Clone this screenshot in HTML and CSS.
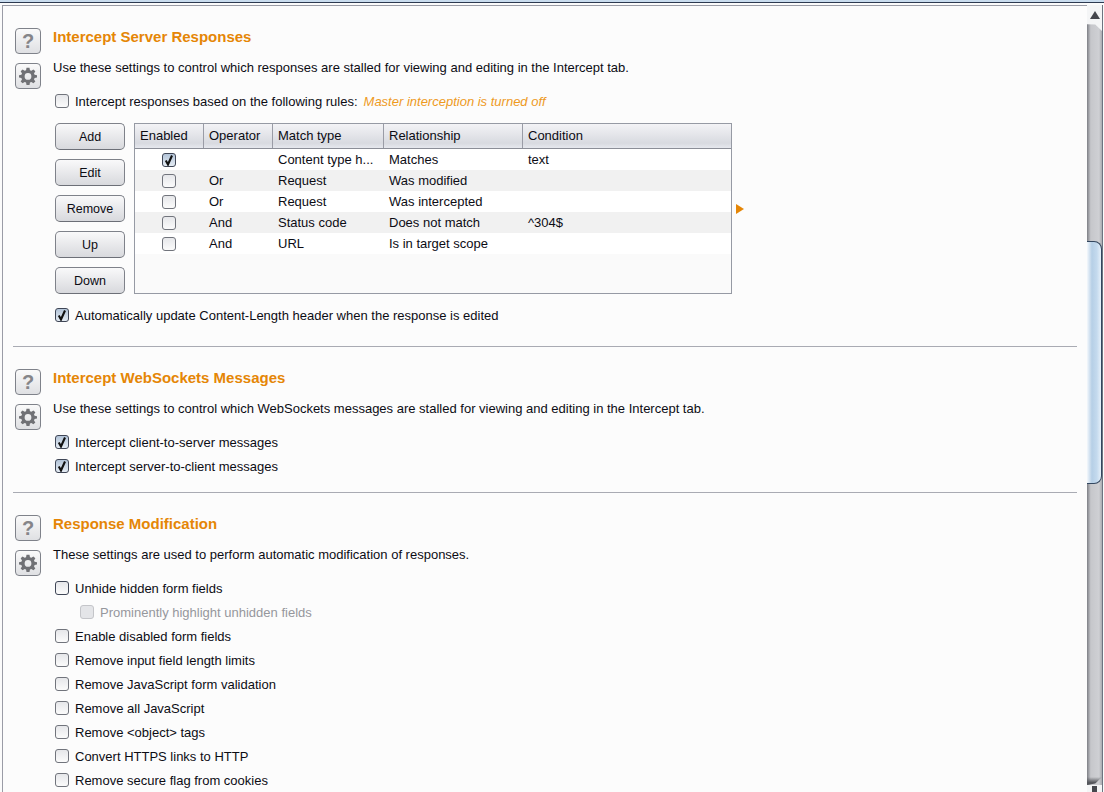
FILE: index.html
```html
<!DOCTYPE html>
<html lang="en">
<head>
<meta charset="utf-8">
<title>Intercept options</title>
<link rel="stylesheet" href="styles.css">
</head>
<body>
<svg class="defs" width="0" height="0">
  <defs>
    <symbol id="gear" viewBox="0 0 24 24">
      <path fill-rule="evenodd" d="M10 1h4l.6 3.2 1.900.8 2.700-1.800 2.600 2.600L20 8.500l.8 1.900L24 11v3l-3.200.6-.8 1.900 1.800 2.700-2.600 2.600-2.700-1.800-1.900.8L14 24h-4l-.6-3.200-1.900-.8-2.700 1.800-2.600-2.600L4 16.500l-.8-1.900L0 14v-3l3.200-.6.800-1.900-1.800-2.700 2.600-2.600L7.500 5l1.900-.8L10 1zm2 7a4.500 4.500 0 1 0 0 9 4.500 4.500 0 0 0 0-9z"/>
    </symbol>
    <symbol id="tick" viewBox="0 0 12 12">
      <path d="M2.800 6.500 5 10.500 9 1.500" fill="none" stroke="#111" stroke-width="2.100"/>
    </symbol>
  </defs>
</svg>
<div class="chrome"></div>
<div class="window">
  <main class="pane">
    <section class="section first">
      <div class="icons">
        <div class="iconbtn help">?</div>
        <div class="iconbtn"><svg class="gear"><use href="#gear"/></svg></div>
      </div>
      <div class="body">
        <h2>Intercept Server Responses</h2>
        <p class="desc">Use these settings to control which responses are stalled for viewing and editing in the Intercept tab.</p>
        <label class="row master"><span class="cb"></span>Intercept responses based on the following rules:<em class="note">Master interception is turned off</em></label>
        <div class="rules">
          <div class="buttons">
            <button>Add</button>
            <button>Edit</button>
            <button>Remove</button>
            <button>Up</button>
            <button>Down</button>
          </div>
          <div class="table">
            <div class="thead">
              <div class="c1">Enabled</div><div class="c2">Operator</div><div class="c3">Match type</div><div class="c4">Relationship</div><div class="c5">Condition</div>
            </div>
            <div class="tr">
              <div class="c1"><span class="cb on"><svg><use href="#tick"/></svg></span></div><div class="c2"></div><div class="c3">Content type h...</div><div class="c4">Matches</div><div class="c5">text</div>
            </div>
            <div class="tr alt">
              <div class="c1"><span class="cb"></span></div><div class="c2">Or</div><div class="c3">Request</div><div class="c4">Was modified</div><div class="c5"></div>
            </div>
            <div class="tr">
              <div class="c1"><span class="cb"></span></div><div class="c2">Or</div><div class="c3">Request</div><div class="c4">Was intercepted</div><div class="c5"></div>
            </div>
            <div class="tr alt">
              <div class="c1"><span class="cb"></span></div><div class="c2">And</div><div class="c3">Status code</div><div class="c4">Does not match</div><div class="c5">^304$</div>
            </div>
            <div class="tr">
              <div class="c1"><span class="cb"></span></div><div class="c2">And</div><div class="c3">URL</div><div class="c4">Is in target scope</div><div class="c5"></div>
            </div>
          </div>
          <div class="arrow"></div>
        </div>
        <label class="row after-table"><span class="cb on"><svg><use href="#tick"/></svg></span>Automatically update Content-Length header when the response is edited</label>
      </div>
    </section>

    <section class="section second">
      <div class="icons">
        <div class="iconbtn help">?</div>
        <div class="iconbtn"><svg class="gear"><use href="#gear"/></svg></div>
      </div>
      <div class="body">
        <h2>Intercept WebSockets Messages</h2>
        <p class="desc">Use these settings to control which WebSockets messages are stalled for viewing and editing in the Intercept tab.</p>
        <div class="list">
          <label class="row"><span class="cb on"><svg><use href="#tick"/></svg></span>Intercept client-to-server messages</label>
          <label class="row"><span class="cb on"><svg><use href="#tick"/></svg></span>Intercept server-to-client messages</label>
        </div>
      </div>
    </section>

    <section class="section third">
      <div class="icons">
        <div class="iconbtn help">?</div>
        <div class="iconbtn"><svg class="gear"><use href="#gear"/></svg></div>
      </div>
      <div class="body">
        <h2>Response Modification</h2>
        <p class="desc">These settings are used to perform automatic modification of responses.</p>
        <div class="list">
          <label class="row"><span class="cb strong"></span>Unhide hidden form fields</label>
          <label class="row sub"><span class="cb off"></span>Prominently highlight unhidden fields</label>
          <label class="row"><span class="cb"></span>Enable disabled form fields</label>
          <label class="row"><span class="cb"></span>Remove input field length limits</label>
          <label class="row"><span class="cb"></span>Remove JavaScript form validation</label>
          <label class="row"><span class="cb"></span>Remove all JavaScript</label>
          <label class="row"><span class="cb"></span>Remove &lt;object&gt; tags</label>
          <label class="row"><span class="cb"></span>Convert HTTPS links to HTTP</label>
          <label class="row"><span class="cb"></span>Remove secure flag from cookies</label>
        </div>
      </div>
    </section>
  </main>
  <aside class="scrollbar">
    <div class="sb-btn up"></div>
    <div class="sb-track"><div class="sb-thumb"></div></div>
    <div class="sb-btn down"></div>
  </aside>
</div>
</body>
</html>
```
FILE: styles.css
```css
* { box-sizing: border-box; }
html, body { margin: 0; height: 792px; overflow: hidden; }
body {
  background: #fbfbfb;
  font-family: "Liberation Sans", Arial, sans-serif;
  font-size: 13px;
  color: #0c0c14;
  display: flex;
  flex-direction: column;
}
.defs { position: absolute; }
.chrome {
  height: 5px;
  flex: none;
  background: linear-gradient(#c9dcee 0, #c9dcee 2px, #2d3a50 2px, #2d3a50 3px, #fbfbfb 3px);
}
.window {
  flex: 1;
  min-height: 0;
  display: flex;
  padding-left: 2px;
  padding-right: 1px;
}
.pane {
  flex: 1;
  min-width: 0;
  border-left: 1px solid #9a9ca6;
  border-top: 1px solid #9a9ca6;
  padding: 0 10px 0 10px;
  background: #fcfcfc;
  overflow: hidden;
}
.section { display: flex; border-bottom: 1px solid #a9abb3; }
.first { padding-top: 22px; height: 341px; }
.second { padding-top: 22px; height: 146px; }
.third { padding-top: 22px; border-bottom: 0; }
.icons {
  width: 40px;
  flex: none;
  padding-left: 2px;
  display: flex;
  flex-direction: column;
  gap: 9px;
}
.iconbtn {
  width: 26px;
  height: 26px;
  border: 1px solid #7f828a;
  border-radius: 4px;
  background: linear-gradient(#fafafa, #dfe0e3);
  display: flex;
  align-items: center;
  justify-content: center;
}
.help { font: bold 20px "Liberation Sans", sans-serif; color: #858589; }
.gear { width: 18px; height: 18px; fill: #707175; }
.body { flex: 1; min-width: 0; }
h2 {
  margin: 0;
  font-size: 15px;
  line-height: 18px;
  font-weight: bold;
  color: #e58606;
}
.desc { margin: 14px 0 0; line-height: 16px; }
.row {
  display: flex;
  align-items: center;
  height: 24px;
  padding-left: 2px;
  gap: 6px;
}
.master { margin-top: 13px; }
.note { color: #ee9a1e; font-style: italic; }
.cb {
  display: inline-block;
  width: 14px;
  height: 14px;
  flex: none;
  border: 1px solid #71747c;
  border-radius: 3px;
  background: linear-gradient(#e6e7ea, #fbfbfb);
}
.cb.strong { border-color: #3f4656; }
.cb.on { border-color: #3f4656; background: linear-gradient(#b3c4d8, #e4ebf3); }
.cb.off { border-color: #c4c5c9; background: #e4e5e8; }
.cb svg { display: block; width: 12px; height: 12px; }
.sub { padding-left: 27px; color: #96979c; }
.rules { display: flex; align-items: center; margin: 10px 0 9px; padding-left: 2px; }
.buttons {
  width: 70px;
  flex: none;
  margin-right: 9px;
  display: flex;
  flex-direction: column;
  gap: 9px;
}
button {
  height: 27px;
  padding: 0;
  font: inherit;
  font-size: 12.5px;
  color: #0c0c14;
  border: 1px solid #7f828a;
  border-bottom-color: #6c6f77;
  border-radius: 5px;
  background: linear-gradient(#f9f9fa, #d8d9dd);
}
.table {
  width: 598px;
  height: 171px;
  flex: none;
  border: 1px solid #969aa4;
  background: #fafafa;
}
.thead, .tr { display: grid; grid-template-columns: 69px 69px 111px 139px 1fr; }
.thead {
  height: 25px;
  background: linear-gradient(#f3f3f6, #d8dae0 80%, #e6e8ee);
  border-bottom: 1px solid #8b8e97;
}
.thead > div {
  padding-left: 5px;
  line-height: 23px;
  border-right: 1px solid #9a9ca6;
}
.thead > div:last-child { border-right: 0; }
.tr { height: 21px; background: #fff; line-height: 21px; }
.tr.alt { background: #f1f1f1; }
.tr > div { padding-left: 5px; }
.tr > .c1 { padding-left: 27px; display: flex; align-items: center; }
.arrow {
  margin: 0 0 0 4px;
  width: 0;
  height: 0;
  border-left: 8px solid #e58606;
  border-top: 5px solid transparent;
  border-bottom: 5px solid transparent;
}
.list { margin-top: 13px; }
.scrollbar {
  width: 16px;
  flex: none;
  display: flex;
  flex-direction: column;
  border-right: 1px solid #6d7480;
  background: linear-gradient(90deg, #7d7f85, #c6c7cb 25%, #cfd0d4 80%, #a9abb0);
}
.sb-btn { flex: none; background: #f4f5f6; position: relative; }
.sb-btn.up { height: 18px; }
.sb-btn.down { height: 7px; }
.sb-btn.up::after {
  content: "";
  position: absolute;
  left: 3px;
  top: 6px;
  border-bottom: 8px solid #45474d;
  border-left: 5px solid transparent;
  border-right: 5px solid transparent;
}
.sb-btn.down::after {
  content: "";
  position: absolute;
  left: 5px;
  top: 1px;
  width: 5px;
  height: 6px;
  background: #45474d;
}
.sb-track { flex: 1; position: relative; }
.sb-track::before {
  content: "";
  position: absolute;
  left: 0;
  right: 0;
  top: 0;
  height: 8px;
  background: #f4f5f6;
  clip-path: polygon(0 0, 100% 0, 100% 100%, 55% 20%, 0 15%);
}
.sb-track::after {
  content: "";
  position: absolute;
  left: 0;
  right: 0;
  bottom: 0;
  height: 8px;
  background: linear-gradient(transparent, #55575c 70%);
  clip-path: polygon(0 0, 100% 0, 55% 80%, 0 100%);
}
.sb-thumb {
  position: absolute;
  left: 0;
  right: 0;
  top: 218px;
  height: 243px;
  border: 1px solid #33475f;
  border-left: 0;
  border-radius: 0 8px 8px 0;
  background: linear-gradient(90deg, #f4f8fc, #b6cfe6 35%, #c4daee 70%, #e6f0f9);
}
```
